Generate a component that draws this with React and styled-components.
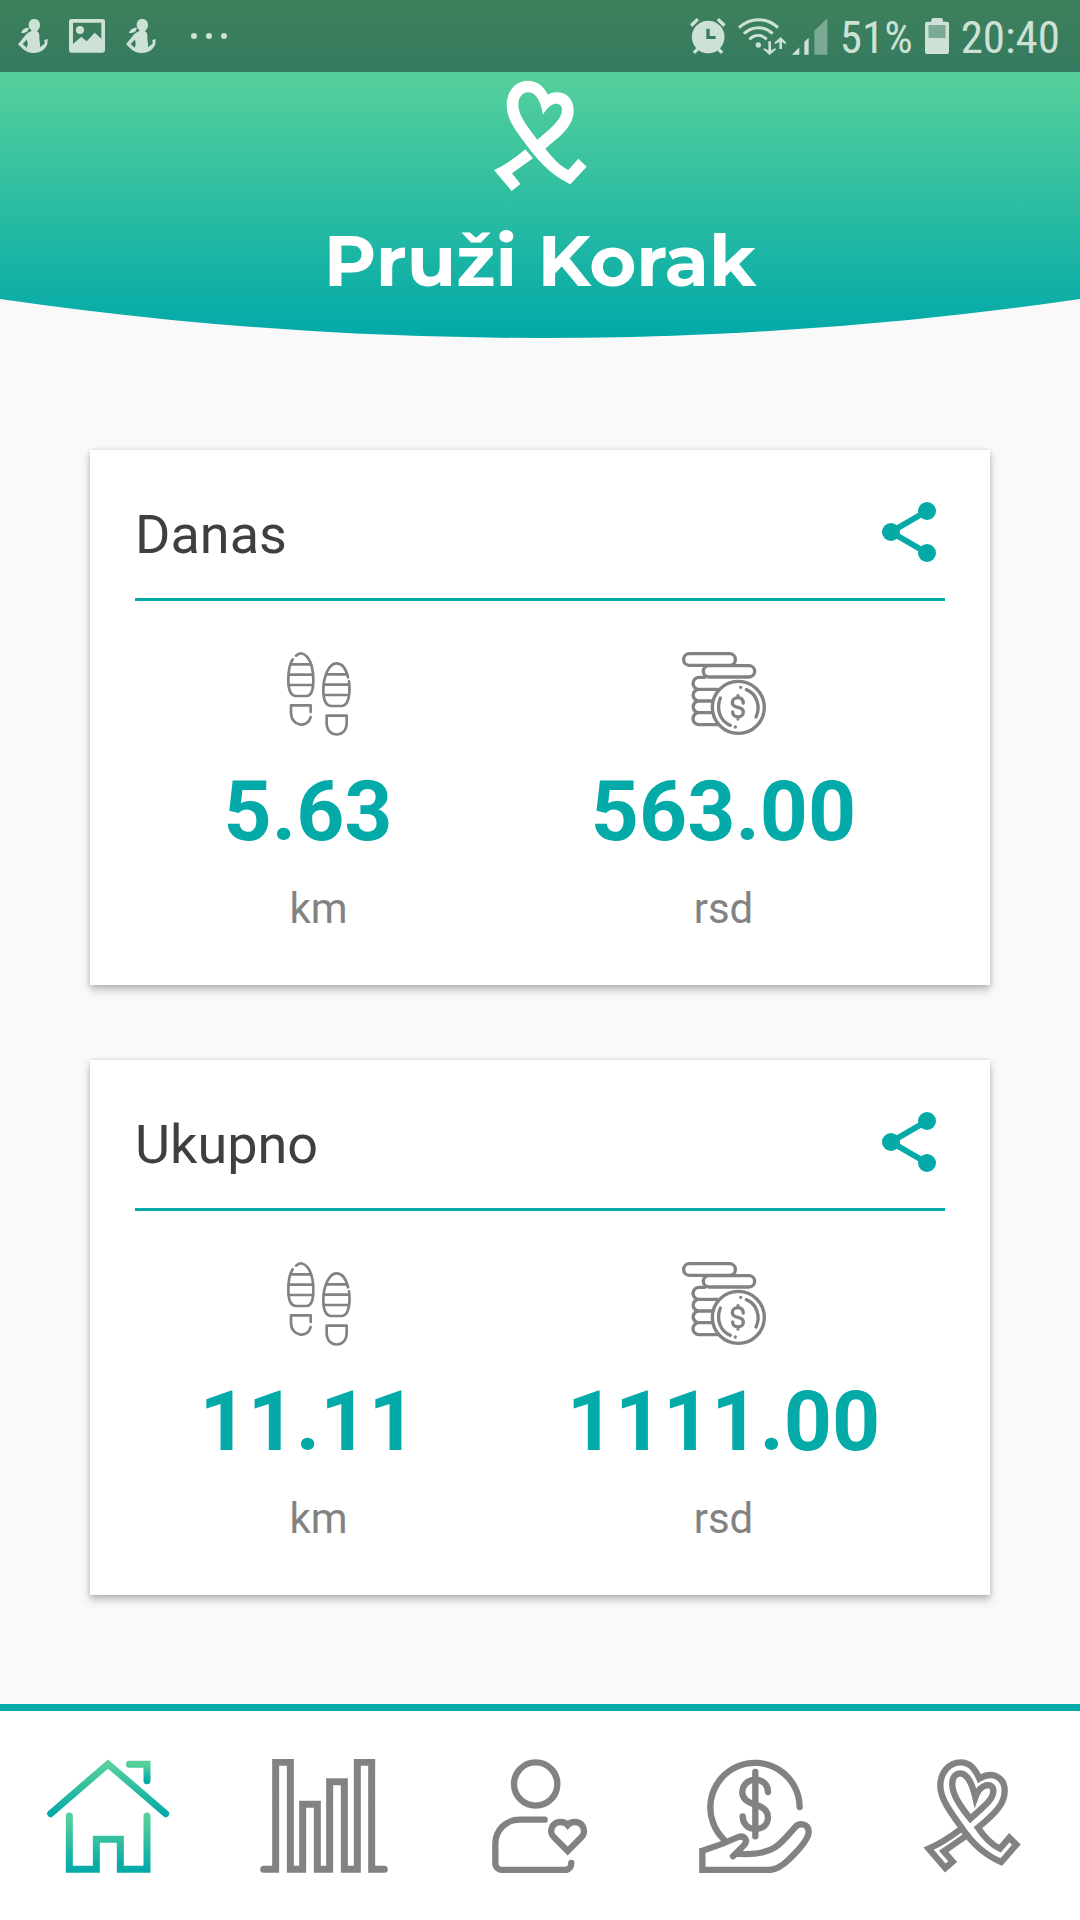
import styled, { createGlobalStyle } from "styled-components";

const primary = "#04aaa8";
const gray = "#828282";
const pale = "#cde1d6";

const GlobalStyle = createGlobalStyle`
  * {
    box-sizing: border-box;
  }
  body {
    margin: 0;
    background-color: #f9f9f9;
    font-family: Roboto, "Noto Sans", sans-serif;
  }
`;

const Page = styled.div`
  min-height: 100vh;
  display: flex;
  flex-direction: column;
`;

const Header = styled.header`
  height: 338px;
  display: flex;
  flex-direction: column;
  align-items: center;
  background: linear-gradient(#56d09b 72px, ${primary} 330px);
  clip-path: ellipse(348% 3758px at 50% calc(100% - 3758px));
`;

const StatusBar = styled.div`
  width: 100%;
  height: 72px;
  padding: 0 20px 0 18px;
  display: flex;
  align-items: center;
  justify-content: space-between;
  color: ${pale};
  background: linear-gradient(#3e805c, #357b60);
`;

const StatusGroup = styled.div`
  display: flex;
  align-items: center;
  gap: ${(props) => props.$gap}px;
`;

const StatusText = styled.span`
  padding-top: 4px;
  font-family: "Roboto Condensed", "Liberation Sans Narrow", Roboto, sans-serif;
  font-size: 45px;
  line-height: 56px;
`;

const Icon = styled.svg`
  display: block;
  flex: none;
  fill: ${(props) => (props.$line ? "none" : "currentColor")};
  stroke: ${(props) => (props.$line ? "currentColor" : "none")};
  stroke-width: ${(props) => props.$line};
  stroke-linecap: round;
`;

const Logo = styled(Icon)`
  margin-top: 8px;
  color: #fff;
`;

const Title = styled.h1`
  margin: 24px 0 0;
  font-family: Montserrat, Inter, sans-serif;
  font-size: 72px;
  line-height: 88px;
  font-weight: 700;
  color: #fff;
`;

const Main = styled.main`
  flex: 1;
  padding: 112px 90px 75px;
  display: flex;
  flex-direction: column;
  gap: 75px;
`;

const Card = styled.section`
  background-color: #fff;
  box-shadow: 0 5px 8px rgba(0, 0, 0, 0.24), 0 0 4px rgba(0, 0, 0, 0.14);
`;

const CardHeader = styled.div`
  height: 151px;
  margin: 0 45px;
  padding-top: 46px;
  display: flex;
  align-items: flex-start;
  justify-content: space-between;
  border-bottom: 3px solid ${primary};
`;

const CardTitle = styled.h2`
  margin: 0;
  font-size: 54px;
  line-height: 78px;
  font-weight: 400;
  color: #3f3f3f;
`;

const ShareButton = styled.button`
  padding: 0;
  border: 0;
  background: none;
  color: ${primary};
  cursor: pointer;
`;

const Metrics = styled.div`
  padding: 51px 64px 51px 26px;
  display: grid;
  grid-template-columns: 1fr 1fr;
`;

const Metric = styled.div`
  display: flex;
  flex-direction: column;
  align-items: center;
  color: ${gray};
`;

const Value = styled.strong`
  margin-top: 27px;
  font-size: 84px;
  line-height: 98px;
  font-weight: 700;
  white-space: pre;
  color: ${primary};
`;

const Unit = styled.span`
  margin-top: 23px;
  font-size: 42px;
  line-height: 50px;
`;

const Nav = styled.nav`
  height: 216px;
  display: grid;
  grid-template-columns: repeat(5, 1fr);
  border-top: 7px solid ${primary};
  background-color: #fff;
`;

const NavLink = styled.a`
  display: flex;
  align-items: center;
  justify-content: center;
  color: ${gray};
`;

function RunnerIcon() {
  return (
    <Icon width="30" height="34" viewBox="58 57 90 102">
      <path d="M106 57C118 57 124 65 124 75C124 84 120 89 115 93V98H99V92C93 87 90 81 90 75C90 65 96 57 106 57Z" />
      <path d="M67 99C70 88 79 83 91 83L87 93C82 98 75 100 67 99Z" />
      <path
        fillRule="evenodd"
        d="M98 93L115 94C121 97 123 104 122 112C121 122 126 130 124 142L138 131L137 120L147 117L146 132C140 148 126 159 106 159C90 159 80 153 73 147L58 133L84 101C88 98 93 96 98 93ZM84 119L72 132L84 143C88 135 88 127 84 119Z"
      />
    </Icon>
  );
}

function PictureIcon() {
  return (
    <Icon width="36" height="34" viewBox="210 57 108 102">
      <path
        fillRule="evenodd"
        d="M217 57H311Q318 57 318 64V151Q318 158 311 158H217Q210 158 210 151V64Q210 57 217 57ZM222 68V132L247 110L263 124L287 98L307 116V68Z"
      />
      <circle cx="243" cy="90" r="12" />
    </Icon>
  );
}

function DotsIcon() {
  return (
    <Icon width="38" height="8" viewBox="0 0 38 8">
      <circle cx="4" cy="4" r="3" />
      <circle cx="19" cy="4" r="3" />
      <circle cx="34" cy="4" r="3" />
    </Icon>
  );
}

function AlarmIcon() {
  return (
    <Icon width="36" height="36" viewBox="54 54 108 108">
      <path
        fillRule="evenodd"
        d="M109 62A49 49 0 1 1 108 62ZM103 86V117H131V108H113V86Z"
      />
      <path d="M54 73L74 54L81 61L61 81ZM161 73L141 54L134 61L154 81ZM62 155L75 142L82 149L69 162ZM154 155L141 142L134 149L147 162Z" />
    </Icon>
  );
}

function WifiIcon() {
  return (
    <Icon width="48" height="37" viewBox="204 50 144 111">
      <g fill="none" stroke="currentColor" strokeWidth="9" strokeLinecap="butt">
        <path d="M207 79C241 47 290 47 324 79" />
        <path d="M222 97C248 73 282 73 308 97" />
        <path d="M238 114C255 99 275 99 290 114" />
        <path d="M299 120V150M332 143V118" strokeWidth="8" />
      </g>
      <circle cx="265" cy="131" r="8" />
      <path d="M281 140L299 149L317 140V145L299 161L281 145ZM314 123L332 107L348 123V129L332 120L314 129Z" />
    </Icon>
  );
}

function SignalIcon() {
  return (
    <Icon width="36" height="37" viewBox="368 49 108 111">
      <path d="M368 159L390 137V159ZM405 120L418 108V159H405Z" />
      <path opacity="0.45" d="M435 87L474 50V159H435Z" />
    </Icon>
  );
}

function BatteryIcon() {
  return (
    <Icon width="24" height="36" viewBox="768 54 72 108">
      <path
        fillRule="evenodd"
        d="M787 65V60Q787 54 793 54H816Q822 54 822 60V65H834Q840 65 840 71V156Q840 162 834 162H774Q768 162 768 156V71Q768 65 774 65ZM779 76V114H829V76Z"
      />
      <path opacity="0.45" d="M779 76H829V114H779Z" />
    </Icon>
  );
}

function RibbonLogo() {
  return (
    <Logo width="95" height="112" viewBox="580 31 285 336">
      <path
        fillRule="evenodd"
        d="M745 75C732 47 709 33 685 33C645 33 621 68 621 106C621 143 641 172 665 205C705 262 750 315 812 344L861 291L836 267L806 301C780 288 757 262 737 237C784 198 822 170 822 122C822 88 800 68 772 68C762 68 752 70 745 75ZM730 135C724 98 710 68 686 68C664 68 656 88 656 107C656 135 680 168 713 210C750 178 787 150 787 120C787 108 780 102 770 102C755 102 742 115 730 135Z"
      />
      <path d="M677 239L700 266L637 311L662 343L636 364L583 301C610 290 645 266 677 239Z" />
    </Logo>
  );
}

function ShareIcon() {
  return (
    <Icon width="72" height="72" viewBox="0 0 24 24">
      <path d="M18 5L6 12L18 19" fill="none" stroke="currentColor" strokeWidth="2" />
      <circle cx="18" cy="5" r="3" />
      <circle cx="6" cy="12" r="3" />
      <circle cx="18" cy="19" r="3" />
    </Icon>
  );
}

function StepsIcon() {
  return (
    <Icon $line={8} width="64" height="84" viewBox="52 66 192 252">
      <path d="M79 77C102 55 131 88 131 150C131 182 125 198 110 198H80C63 198 56 178 56 150C56 123 60 101 69 88" />
      <path d="M64 103H124M57 134H130M57 165H130" />
      <path d="M123 246V226H64V248C64 290 115 296 123 261" strokeLinejoin="round" />
      <path d="M238 154C243 192 236 228 216 228H186C168 228 161 208 161 180C161 140 178 100 200 100C216 100 229 115 235 142" />
      <path d="M170 133H230M163 164H237M163 195H237" />
      <path d="M171 257H231V279C231 325 171 325 171 279Z" strokeLinejoin="round" />
    </Icon>
  );
}

function CoinsIcon() {
  return (
    <Icon $line={10} width="84" height="84" viewBox="36 37 252 252">
      <rect x="41" y="42" width="155" height="35" rx="17" />
      <rect x="100" y="78" width="154" height="34" rx="17" />
      <path d="M104 113H87A18 18 0 0 0 87 149H142M87 149A17 17 0 0 0 87 184H127M87 184A17 17 0 0 0 87 219H128M87 219A17 17 0 0 0 87 255H143" />
      <circle cx="205" cy="203" r="78" />
      <path d="M151 175C138 208 150 245 181 257M229 150C260 162 273 200 258 232M212 143V143M196 262V262" />
      <path d="M204 168V174M220 190C219 178 211 174 204 174C193 174 187 181 187 189C187 199 196 201 204 203C213 205 220 209 220 217C220 226 213 232 204 232C195 232 188 226 188 217M204 232V238" />
    </Icon>
  );
}

function HomeIcon() {
  return (
    <Icon $line={21} width="128" height="114" viewBox="132 207 384 342">
      <defs>
        <linearGradient id="homeFade" x1="0" y1="0" x2="0" y2="1">
          <stop offset="0" stopColor="#58d09b" />
          <stop offset="1" stopColor={primary} />
        </linearGradient>
      </defs>
      <g stroke="url(#homeFade)">
        <path d="M152 371L324 222L497 371" />
        <path d="M388 223H441V272" />
        <path d="M208 378V538H289V448H361V538H441V378" />
      </g>
    </Icon>
  );
}

function ChartIcon() {
  return (
    <Icon $line={21} width="128" height="114" viewBox="780 207 384 342">
      <path d="M791 538H827V217H871V538H908V343H952V538H989V275H1033V538H1072V217H1115V538H1153" />
    </Icon>
  );
}

function ProfileIcon() {
  return (
    <Icon $line={19} width="128" height="114" viewBox="48 57 384 342">
      <circle cx="227" cy="132" r="65" />
      <path d="M254 239H180C138 239 106 270 106 312V368C106 382 115 390 128 390H315C327 390 334 381 334 369" />
      <path d="M323 333L282 292C265 275 276 246 301 246C312 246 319 250 323 255C327 250 334 246 345 246C370 246 380 275 364 292Z" />
    </Icon>
  );
}

function DonateIcon() {
  return (
    <Icon $line={19} width="128" height="114" viewBox="36 57 384 342">
      <path d="M359 201A134 134 0 1 0 133 300" />
      <path d="M226 96V289" />
      <path d="M264 156C264 134 248 119 226 119C204 119 187 135 187 157C187 178 204 188 226 194C248 200 264 210 264 232C264 254 248 267 226 267C204 267 188 252 188 229" />
      <path d="M159 349L193 315C205 300 192 285 175 291C145 305 110 319 67 332V390H265C287 390 303 381 325 360C350 336 387 297 386 275C385 250 358 247 345 262C325 285 305 310 285 322C260 338 220 345 167 341" />
    </Icon>
  );
}

function RibbonIcon() {
  return (
    <Icon $line={19} width="128" height="114" viewBox="24 57 384 342">
      <path d="M238 116C225 84 205 67 183 67C145 67 121 100 121 137C121 175 150 215 185 263C215 308 250 343 304 366L349 314L328 293L300 326C275 314 252 290 234 263C290 217 314 190 314 152C314 115 280 90 238 116Z" />
      <path d="M226 172C216 128 200 100 181 100C160 100 154 122 158 145C163 175 188 208 211 236C250 200 281 180 280 150C278 128 242 128 226 172Z" />
      <path d="M182 268C150 292 120 312 86 326L136 384L158 365L131 334L202 285" />
    </Icon>
  );
}

const cards = [
  { title: "Danas", km: "5.63", rsd: "563.00" },
  { title: "Ukupno", km: "11.11", rsd: "1111.00" },
];

const links = [
  { label: "Početna", href: "#home", icon: <HomeIcon /> },
  { label: "Statistika", href: "#stats", icon: <ChartIcon /> },
  { label: "Profil", href: "#profile", icon: <ProfileIcon /> },
  { label: "Donacije", href: "#donate", icon: <DonateIcon /> },
  { label: "O nama", href: "#about", icon: <RibbonIcon /> },
];

function StatsCard({ title, km, rsd }) {
  return (
    <Card>
      <CardHeader>
        <CardTitle>{title}</CardTitle>
        <ShareButton type="button" aria-label={"Podeli " + title}>
          <ShareIcon />
        </ShareButton>
      </CardHeader>
      <Metrics>
        <Metric>
          <StepsIcon />
          <Value>{km + " "}</Value>
          <Unit>km</Unit>
        </Metric>
        <Metric>
          <CoinsIcon />
          <Value>{rsd}</Value>
          <Unit>rsd</Unit>
        </Metric>
      </Metrics>
    </Card>
  );
}

export default function App() {
  return (
    <Page>
      <GlobalStyle />
      <Header>
        <StatusBar>
          <StatusGroup $gap={34}>
            <StatusGroup $gap={21}>
              <RunnerIcon />
              <PictureIcon />
              <RunnerIcon />
            </StatusGroup>
            <DotsIcon />
          </StatusGroup>
          <StatusGroup $gap={12}>
            <AlarmIcon />
            <StatusGroup $gap={6}>
              <WifiIcon />
              <SignalIcon />
            </StatusGroup>
            <StatusText>51%</StatusText>
            <BatteryIcon />
            <StatusText>20:40</StatusText>
          </StatusGroup>
        </StatusBar>
        <RibbonLogo />
        <Title>Pruži Korak</Title>
      </Header>
      <Main>
        {cards.map((card) => (
          <StatsCard key={card.title} {...card} />
        ))}
      </Main>
      <Nav>
        {links.map(({ label, href, icon }) => (
          <NavLink key={label} href={href} aria-label={label}>
            {icon}
          </NavLink>
        ))}
      </Nav>
    </Page>
  );
}
